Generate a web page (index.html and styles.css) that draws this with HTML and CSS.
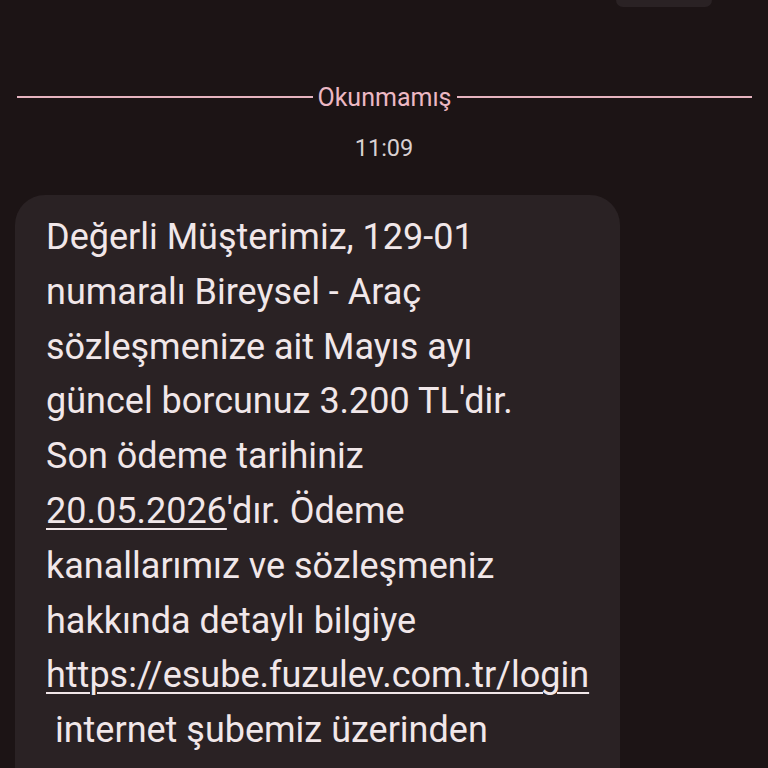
FILE: index.html
```html
<!DOCTYPE html>
<html lang="tr">
<head>
<meta charset="utf-8">
<link rel="stylesheet" href="styles.css">
</head>
<body>
<div class="thread">
  <div class="prev-bubble"></div>
  <div class="divider">
    <span class="rule"></span>
    <span class="divider-label">Okunmamış</span>
    <span class="rule"></span>
  </div>
  <div class="time">11:09</div>
  <div class="bubble">
    <p class="msg">Değerli Müşterimiz, 129-01<br>numaralı Bireysel - Araç<br>sözleşmenize ait Mayıs ayı<br>güncel borcunuz 3.200 TL'dir.<br>Son ödeme tarihiniz<br><span class="link">20.05.2026</span>'dır. Ödeme<br>kanallarımız ve sözleşmeniz<br>hakkında detaylı bilgiye<br><span class="link">https://esube.fuzulev.com.tr/login</span><br>&nbsp;internet şubemiz üzerinden</p>
  </div>
</div>
</body>
</html>
```
FILE: styles.css
```css
html, body {
  margin: 0;
  padding: 0;
  background: #1c1415;
  height: 100%;
  overflow: hidden;
}
.thread {
  display: flex;
  flex-direction: column;
  font-family: Roboto, "Noto Sans", sans-serif;
}
.prev-bubble {
  align-self: flex-end;
  margin-right: 56px;
  width: 96px;
  height: 7px;
  background: #2a2224;
  border-radius: 0 0 14px 14px;
}
.divider {
  display: flex;
  align-items: center;
  gap: 5px;
  margin: 77px 16px 0 17px;
  height: 26px;
}
.rule {
  flex: 1;
  height: 2px;
  background: #e6b3bf;
}
.divider-label {
  color: #ecb8c4;
  font-size: 25px;
  line-height: 26px;
  position: relative;
  top: 1px;
}
.time {
  text-align: center;
  color: #d8d0d1;
  font-size: 23.5px;
  line-height: 26px;
  margin-top: 25px;
}
.bubble {
  margin: 34px 0 0 15px;
  width: 605px;
  background: #2a2224;
  border-radius: 30px;
  padding: 15px 0 40px 31px;
  box-sizing: border-box;
}
.msg {
  margin: 0;
  color: #f1e7e9;
  font-size: 36px;
  line-height: 54.8px;
  white-space: nowrap;
}
.link {
  text-decoration: underline;
  text-decoration-thickness: 2px;
  text-underline-offset: 5px;
}
```
